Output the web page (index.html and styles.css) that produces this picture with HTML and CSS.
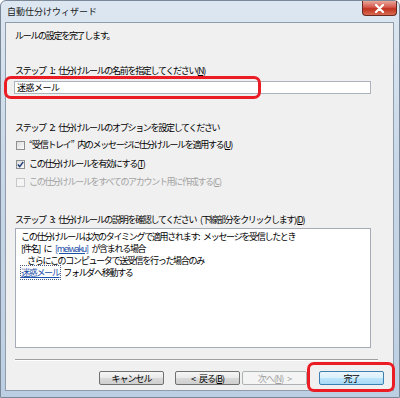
FILE: index.html
```html
<!DOCTYPE html>
<html lang="ja">
<head>
  <meta charset="UTF-8" />
  <title>自動仕分けウィザード</title>
  <link rel="stylesheet" href="styles.css">
</head>
<body>
  <div class="window">
    <div class="titlebar">
      <span class="title">自動仕分けウィザード</span>
      <div class="close">
        <svg width="11" height="9" viewBox="0 0 11 9">
          <path d="M2 1 L9 8 M9 1 L2 8" stroke="#fff" stroke-width="2.2" stroke-linecap="round"/>
        </svg>
      </div>
    </div>

    <div class="client">
      <div class="text intro">ルールの設定を完了します。</div>

      <div class="text step1">ステップ 1: 仕分けルールの名前を指定してください(<u>N</u>)</div>
      <div class="name-input">迷惑メール</div>

      <div class="text step2">ステップ 2: 仕分けルールのオプションを設定してください</div>
      <label class="option first">
        <span class="check"></span>
        <span class="text">“受信トレイ” 内のメッセージに仕分けルールを適用する(<u>U</u>)</span>
      </label>
      <label class="option second">
        <span class="check checked">
          <svg width="7" height="7" viewBox="0 0 7 7"><path d="M0.8 3.6 L2.7 5.6 L6.2 1" fill="none" stroke="#1f3d7a" stroke-width="1.4"/></svg>
        </span>
        <span class="text">この仕分けルールを有効にする(<u>T</u>)</span>
      </label>
      <label class="option third disabled">
        <span class="check"></span>
        <span class="text">この仕分けルールをすべてのアカウント用に作成する(<u>C</u>)</span>
      </label>

      <div class="text step3">ステップ 3: 仕分けルールの説明を確認してください (下線部分をクリックします)(<u>D</u>)</div>
      <div class="desc">
        <div class="text">この仕分けルールは次のタイミングで適用されます: メッセージを受信したとき</div>
        <div class="text">[件名] に <a class="link">[meiwaku]</a> が含まれる場合</div>
        <div class="text indent">さらにこのコンピュータで送受信を行った場合のみ</div>
        <div class="text"><a class="link focus">迷惑メール</a> フォルダへ移動する</div>
      </div>

      <div class="separator"></div>

      <div class="buttons">
        <button class="btn cancel">キャンセル</button>
        <button class="btn back">&lt; 戻る(<u>B</u>)</button>
        <button class="btn next" disabled>次へ(<u>N</u>) &gt;</button>
        <button class="btn finish">完了</button>
      </div>
    </div>

    <div class="mark mark-name"></div>
    <div class="mark mark-finish"></div>
  </div>
</body>
</html>
```

FILE: styles.css
```css
body {
  margin: 0;
  padding: 0;
  background: #fff;
  font-family: "Noto Sans CJK JP", "Liberation Sans", sans-serif;
}
.window {
  position: relative;
  width: 400px;
  height: 398px;
  box-sizing: border-box;
  border: 1px solid #7a8898;
  border-radius: 6px 6px 0 0;
  background: linear-gradient(#dde7f1, #c9d8e8 40%, #bccfe2);
  padding: 0 5px 6px 4px;
}
.titlebar {
  height: 21px;
  display: flex;
  align-items: flex-start;
  justify-content: space-between;
}
.title {
  font-size: 9px;
  line-height: 12px;
  color: #1a1a1a;
  padding: 5px 0 0 2px;
}
.close {
  width: 33px;
  height: 14px;
  margin-right: -3px;
  border: 1px solid #6a2a22;
  border-top: none;
  border-radius: 0 0 4px 4px;
  background: linear-gradient(#e9a89a, #d4574a 45%, #c0321f 55%, #d96c50);
  display: flex;
  align-items: center;
  justify-content: center;
}
.client {
  height: 369px;
  box-sizing: border-box;
  border: 1px solid #8f9cab;
  background: #f0f0f0;
  padding: 7px 22px 0 9px;
}
.text {
  font-size: 9px;
  line-height: 12px;
  letter-spacing: -1.3px;
  word-spacing: 3px;
  color: #000;
  white-space: nowrap;
}
.step1 {
  margin-top: 23px;
}
.name-input {
  margin: 4px 0 0 -1px;
  height: 13px;
  box-sizing: border-box;
  border: 1px solid #a9b4bf;
  background: #fff;
  font-size: 9px;
  line-height: 11px;
  letter-spacing: -0.5px;
  padding-left: 2px;
}
.step2 {
  margin-top: 28px;
}
.option {
  display: flex;
  align-items: center;
  gap: 4px;
  height: 12px;
  padding-left: 1px;
}
.option.first {
  margin-top: 5px;
}
.option.second {
  margin-top: 7px;
}
.option.third {
  margin-top: 6px;
}
.check {
  width: 9px;
  height: 9px;
  box-sizing: border-box;
  border: 1px solid #8e8f8f;
  background: linear-gradient(135deg, #dcdcdc, #fbfbfb);
  display: flex;
  align-items: center;
  justify-content: center;
}
.option.disabled .check {
  border-color: #c8c8c8;
  background: #f4f4f4;
}
.option.disabled .text {
  color: #a2a2a2;
}
.step3 {
  margin-top: 26px;
}
.desc {
  margin-top: 2px;
  height: 120px;
  box-sizing: border-box;
  border: 1px solid #a5acb5;
  background: #fff;
  padding: 2px 5px;
}
.desc .indent {
  padding-left: 6px;
}
.link {
  color: #1c4fa8;
  text-decoration: underline;
}
.link.focus {
  outline: 1px dotted #4a5f8a;
}
.separator {
  margin: 11px -7px 0 0;
  border-top: 1px solid #a0a0a0;
  border-bottom: 1px solid #fff;
}
.buttons {
  margin: 10px -13px 0 0;
  display: flex;
  justify-content: flex-end;
}
.btn {
  width: 65px;
  height: 14px;
  padding: 0;
  box-sizing: border-box;
  border: 1px solid #707070;
  border-radius: 2px;
  background: linear-gradient(#f6f6f6, #e9e9e9 50%, #d9d9d9 51%, #cfcfcf);
  font-family: inherit;
  font-size: 9px;
  line-height: 11px;
  letter-spacing: -1px;
  word-spacing: 3px;
  color: #000;
}
.btn.back {
  margin-left: 11px;
}
.btn.next {
  margin-left: 2px;
  border-color: #adb2b5;
  background: #f4f4f4;
  color: #a0a0a0;
}
.btn.finish {
  margin-left: 12px;
  border-color: #3c7fb1;
  background: linear-gradient(#eaf6fd, #d9f0fc 50%, #bee6fd 51%, #a7d9f5);
}
.mark {
  position: absolute;
  border: 3px solid #ec1c24;
  border-radius: 7px;
}
.mark-name {
  left: 3px;
  top: 75px;
  width: 251px;
  height: 17px;
}
.mark-finish {
  left: 306px;
  top: 361px;
  width: 82px;
  height: 24px;
}
```
